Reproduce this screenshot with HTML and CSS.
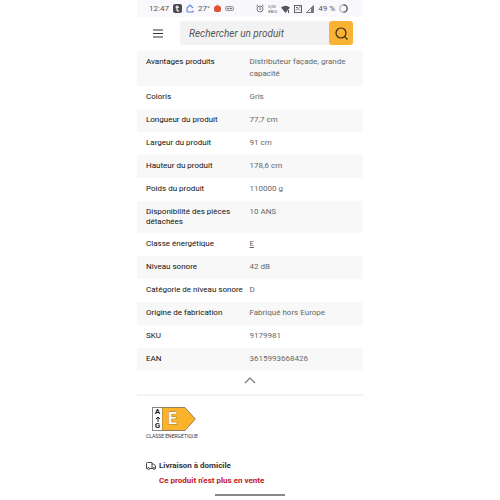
FILE: index.html
```
<!DOCTYPE html>
<html lang="fr">

<head>
    <meta charset="UTF-8">
    <meta name="viewport" content="width=device-width, initial-scale=1.0">
    <title>Fiche produit</title>
    <link rel="stylesheet" href="styles.css">
</head>

<body>
    <div class="phone">
        <div class="status-bar">
            <div class="status-left">
                <span>12:47</span>
                <svg width="9" height="9" viewBox="0 0 9 9">
                    <rect width="9" height="9" rx="2" fill="#4c4c52" />
                    <path d="M4 1.5v4.2q0 1.3 1.3 1.3h.9M2.6 3.2h3.4" fill="none" stroke="#fff" stroke-width="1.2" />
                </svg>
                <svg width="8" height="9" viewBox="0 0 8 9">
                    <path d="M1 8V4l3-3 3 3M1 8h6V6.5" fill="none" stroke="#5b86d8" stroke-width="1.1" />
                </svg>
                <span>27°</span>
                <svg width="7" height="9" viewBox="0 0 7 9">
                    <path d="M2 3Q2 1 3.5 1T5 3" fill="none" stroke="#d9694f" />
                    <rect y="2" width="7" height="6" rx="2" fill="#de5335" />
                </svg>
                <svg width="9" height="5" viewBox="0 0 9 5">
                    <rect x=".5" y=".5" width="8" height="4" rx="1" fill="#ddd" stroke="#98989c" />
                    <path d="M2 2.5h2M5 2.5h2" stroke="#77777c" />
                </svg>
            </div>
            <div class="status-right">
                <svg width="8" height="9" viewBox="0 0 8 9" fill="none" stroke="#66666b" stroke-width=".9">
                    <circle cx="4" cy="5" r="3" />
                    <path d="M4 3v2.2l1.3.8M.4 2.2L2 .8M7.6 2.2L6 .8" />
                </svg>
                <span class="speed"><span>5,00</span><span>KB/S</span></span>
                <svg width="9" height="8" viewBox="0 0 9 8">
                    <path d="M0 2.5Q4.5-1 9 2.5L4.5 8z" fill="#55555a" />
                    <path d="M7.5 5v3" stroke="#55555a" />
                </svg>
                <svg width="8" height="8" viewBox="0 0 8 8" fill="none" stroke="#66666b">
                    <rect x=".5" y=".5" width="7" height="7" />
                    <path d="M2 2.5h2M2 5.5l2-2 2 2M5 2h1.5" />
                </svg>
                <svg width="8" height="8" viewBox="0 0 8 8">
                    <path d="M.6 7.5h6.9V.6z" fill="none" stroke="#66666b" stroke-width=".9" />
                    <path d="M5 3L7.5.6v6.900H5z" fill="#77777c" />
                </svg>
                <span>49 %</span>
                <svg width="9" height="9" viewBox="0 0 9 9" fill="none" stroke-width="1.2">
                    <circle cx="4.5" cy="4.5" r="3.7" stroke="#b4b4b8" />
                    <path d="M4.5.8a3.7 3.7 0 0 1 0 7.4" stroke="#55555a" />
                </svg>
            </div>
        </div>

        <header class="header">
            <button class="menu-btn" type="button" aria-label="Menu">
                <svg width="10" height="9" viewBox="0 0 10 9">
                    <path d="M0 1h10M0 4.5h10M0 8h10" stroke="#333" stroke-width="1.2" />
                </svg>
            </button>
            <form class="search">
                <input class="search-input" type="search" placeholder="Rechercher un produit" aria-label="Rechercher un produit">
                <button class="search-btn" type="button" aria-label="Rechercher">
                    <svg width="13" height="13" viewBox="0 0 13 13" fill="none" stroke="#3c2c10" stroke-width="1.2">
                        <circle cx="6" cy="6" r="5" />
                        <path d="M9.5 9.5l3 3" />
                    </svg>
                </button>
            </form>
        </header>

        <main>
            <table class="specs">
                <tr><th scope="row">Avantages produits</th><td>Distributeur façade, grande capacité</td></tr>
                <tr><th scope="row">Coloris</th><td>Gris</td></tr>
                <tr><th scope="row">Longueur du produit</th><td>77,7 cm</td></tr>
                <tr><th scope="row">Largeur du produit</th><td>91 cm</td></tr>
                <tr><th scope="row">Hauteur du produit</th><td>178,6 cm</td></tr>
                <tr><th scope="row">Poids du produit</th><td>110000 g</td></tr>
                <tr><th scope="row">Disponibilité des pièces détachées</th><td>10 ANS</td></tr>
                <tr><th scope="row">Classe énergétique</th><td><a href="#energie">E</a></td></tr>
                <tr><th scope="row">Niveau sonore</th><td>42 dB</td></tr>
                <tr><th scope="row">Catégorie de niveau sonore</th><td>D</td></tr>
                <tr><th scope="row">Origine de fabrication</th><td>Fabriqué hors Europe</td></tr>
                <tr><th scope="row">SKU</th><td>9179981</td></tr>
                <tr><th scope="row">EAN</th><td>3615993668426</td></tr>
            </table>
            <button class="collapse-btn" type="button" aria-label="Réduire">
                <svg width="12" height="7" viewBox="0 0 12 7">
                    <path d="M1 6l5-5 5 5" fill="none" stroke="#777" stroke-width="1.2" />
                </svg>
            </button>

            <section class="energy" id="energie">
                <div class="energy-label">
                    <div class="energy-scale">
                        <span>A</span>
                        <svg width="6" height="6" viewBox="0 0 6 6">
                            <path d="M3 6V1M1 3l2-2 2 2" fill="none" stroke="#222" />
                        </svg>
                        <span>G</span>
                    </div>
                    <div class="energy-arrow">
                        <svg width="34" height="24" viewBox="0 0 34 24">
                            <path d="M0 .5h23L33.3 12 23 23.5H0z" fill="#fbb32c" stroke="#77684a" stroke-width=".8" />
                        </svg>
                        <span class="energy-class">E</span>
                    </div>
                </div>
                <div class="energy-caption">CLASSE ÉNERGÉTIQUE</div>
            </section>

            <section class="delivery">
                <svg width="10" height="8" viewBox="0 0 10 8" fill="none" stroke="#333" stroke-width=".9">
                    <path d="M1.5 6.5H.5v-5q0-1 1-1H6v6H3.5M6 2h1.800L9.500 4v2.500H9M6 6.500h1" />
                    <circle cx="2.5" cy="6.5" r="1" />
                    <circle cx="8" cy="6.5" r="1" />
                </svg>
                <div>
                    <h2 class="delivery-title">Livraison à domicile</h2>
                    <p class="delivery-status">Ce produit n'est plus en vente</p>
                </div>
            </section>
        </main>
        <div class="home-bar"></div>
    </div>
</body>

</html>
```
FILE: styles.css
```
* {
    box-sizing: border-box;
}

body {
    margin: 0;
    background-color: #fff;
    color: #333;
    font-family: Roboto, Arial, sans-serif;
    font-size: 8px;
}

svg {
    display: block;
    flex-shrink: 0;
}

button {
    border: 0;
    padding: 0;
    background: none;
    cursor: pointer;
}

.phone {
    max-width: 226px;
    margin: 0 auto;
}

.status-bar {
    display: flex;
    justify-content: space-between;
    padding: 0 15px 0 12px;
    height: 17px;
    background-color: #f8f8fd;
    color: #55555a;
}

.status-left,
.status-right {
    display: flex;
    align-items: center;
    gap: 4px;
    white-space: nowrap;
}

.speed {
    display: flex;
    flex-direction: column;
    font-size: 4px;
    line-height: 5px;
}

.header {
    display: flex;
    align-items: center;
    padding: 4px 10px 6px 16px;
}

.menu-btn {
    margin-right: 17px;
}

.search {
    display: flex;
    flex: 1;
    min-width: 0;
}

.search-input {
    flex: 1;
    min-width: 0;
    height: 24px;
    padding: 0 9px;
    border: 0;
    border-radius: 3px 0 0 3px;
    background-color: #f2f2f2;
    font-family: inherit;
    font-size: 10px;
    font-style: italic;
}

.search-input::placeholder {
    color: #555;
}

.search-btn {
    display: flex;
    align-items: center;
    justify-content: center;
    width: 24px;
    height: 24px;
    border-radius: 3px;
    background-color: #f9b233;
}

.specs {
    width: 100%;
    border-collapse: collapse;
    table-layout: fixed;
}

.specs tr:nth-child(odd) {
    background-color: #f8f8f8;
}

.specs th,
.specs td {
    text-align: left;
    vertical-align: top;
}

.specs th {
    width: 48%;
    padding: 6px 0 6px 9px;
    color: #111;
    font-weight: 400;
    line-height: 10px;
}

.specs td {
    padding: 5px 9px 6px 4px;
    color: #666;
    line-height: 12px;
}

.specs a {
    color: inherit;
}

.collapse-btn {
    display: flex;
    align-items: center;
    justify-content: center;
    width: 100%;
    height: 25px;
    padding-bottom: 5px;
    border-bottom: 2px solid #f3f3f3;
}

.energy {
    padding: 11px 9px 0;
}

.energy-label {
    display: flex;
    margin-left: 6px;
}

.energy-scale {
    display: flex;
    flex-direction: column;
    align-items: center;
    justify-content: center;
    width: 10px;
    height: 24px;
    border: 1px solid #888;
    border-right: 0;
    color: #222;
    font-weight: 700;
    line-height: 8px;
}

.energy-arrow {
    display: grid;
    align-items: center;
}

.energy-arrow > * {
    grid-area: 1 / 1;
}

.energy-class {
    padding-left: 6px;
    color: #fff;
    font-size: 16px;
    font-weight: 500;
    line-height: 24px;
    -webkit-text-stroke: 1px #a8844a;
    paint-order: stroke fill;
}

.energy-caption {
    margin-top: 1px;
    font-size: 5px;
    line-height: 8px;
}

.delivery {
    display: flex;
    gap: 3px;
    padding: 20px 9px 0;
}

.delivery > svg {
    margin-top: 2px;
}

.delivery-title,
.delivery-status {
    margin: 0;
    font-size: 8px;
    font-weight: 700;
    line-height: 12px;
}

.delivery-status {
    margin-top: 3px;
    color: #c4161c;
}

.home-bar {
    width: 70px;
    height: 2px;
    margin: 7px auto 0;
    background-color: #888;
}
```
